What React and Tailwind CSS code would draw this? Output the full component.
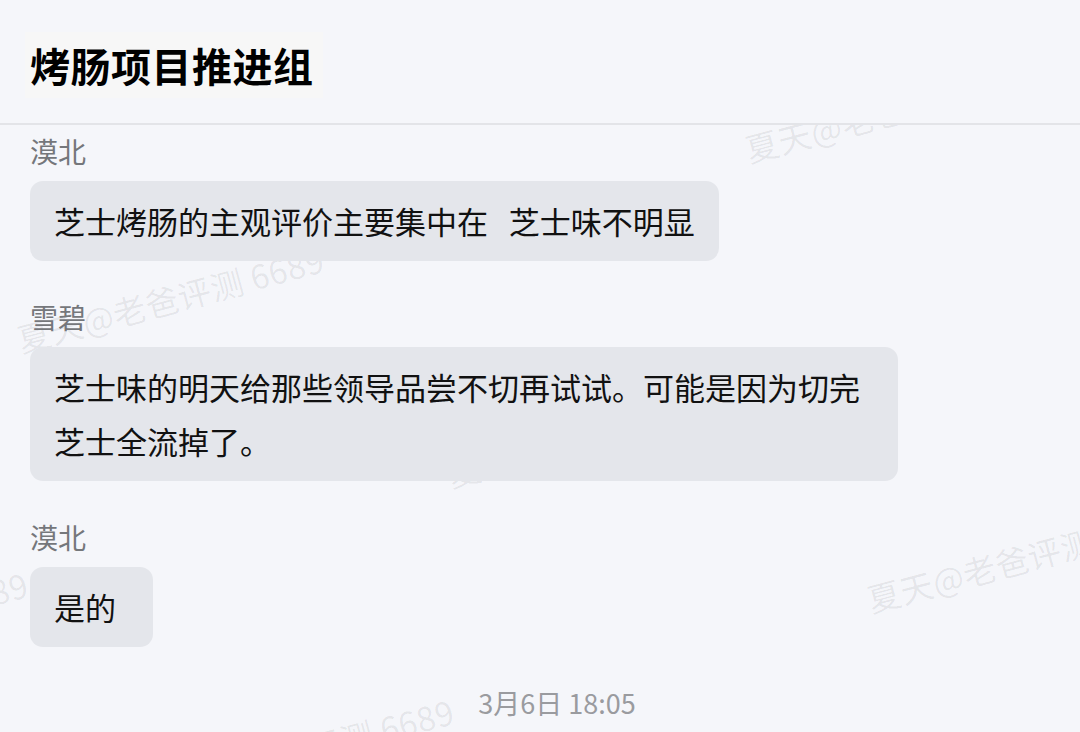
import React from "react";

const messages = [
  { id: 1, sender: "漠北", text: "芝士烤肠的主观评价主要集中在   芝士味不明显" },
  { id: 2, sender: "雪碧", text: "芝士味的明天给那些领导品尝不切再试试。可能是因为切完芝士全流掉了。" },
  { id: 3, sender: "漠北", text: "是的", short: true },
];

// bottom-left corner of each watermark line, relative to the message area
const watermarks = [
  { x: 22, y: 228 },
  { x: -274, y: 553 },
  { x: 152, y: 680 },
  { x: 452, y: 363 },
  { x: 750, y: 38 },
  { x: 872, y: 488 },
];

const Watermark = ({ x, y }) => (
  <span
    className="absolute whitespace-nowrap text-[33px] leading-8 tracking-[0.5px] text-black/[0.07] origin-bottom-left -rotate-[15deg] select-none"
    style={{ left: x, top: y - 30 }}
  >
    夏天@老爸评测 6689
  </span>
);

const Message = ({ sender, text, short }) => (
  <div className="flex flex-col items-start gap-3">
    <span className="text-[28px] leading-9 text-[#75777b]">{sender}</span>
    <div
      className={`max-w-[868px] bg-[#e4e6eb] rounded-[13px] py-[13px] pl-6 text-[31px] leading-[54px] text-[#111] whitespace-pre-wrap ${
        short ? "pr-[37px]" : "pr-6"
      }`}
    >
      {text}
    </div>
  </div>
);

export default function App() {
  return (
    <div className="w-[1080px] h-[732px] flex flex-col bg-[#f5f6fa] overflow-hidden font-['Noto_Sans_CJK_SC','Noto_Sans',sans-serif]">
      {/* ===== HEADER ===== */}
      <div className="h-[125px] shrink-0 pt-8 pl-[25px] border-b-2 border-[#e3e4e8]">
        <div className="inline-block h-[66px] pl-[5px] pr-[9px] bg-[#f7f7f7] text-[40px] tracking-[0.5px] leading-[66px] font-bold text-black">
          烤肠项目推进组
        </div>
      </div>

      {/* ===== MESSAGES ===== */}
      <div className="relative flex-1 overflow-hidden">
        <div className="absolute inset-0 pointer-events-none">
          {watermarks.map((w, i) => (
            <Watermark key={i} x={w.x} y={w.y} />
          ))}
        </div>

        <div className="relative flex flex-col gap-[38px] px-[30px] pt-2">
          {messages.map((m) => (
            <Message key={m.id} {...m} />
          ))}
          <div className="flex justify-center pl-[34px] text-[27px] leading-9 text-[#9a9b9f]">
            3月6日 18:05
          </div>
        </div>
      </div>
    </div>
  );
}
